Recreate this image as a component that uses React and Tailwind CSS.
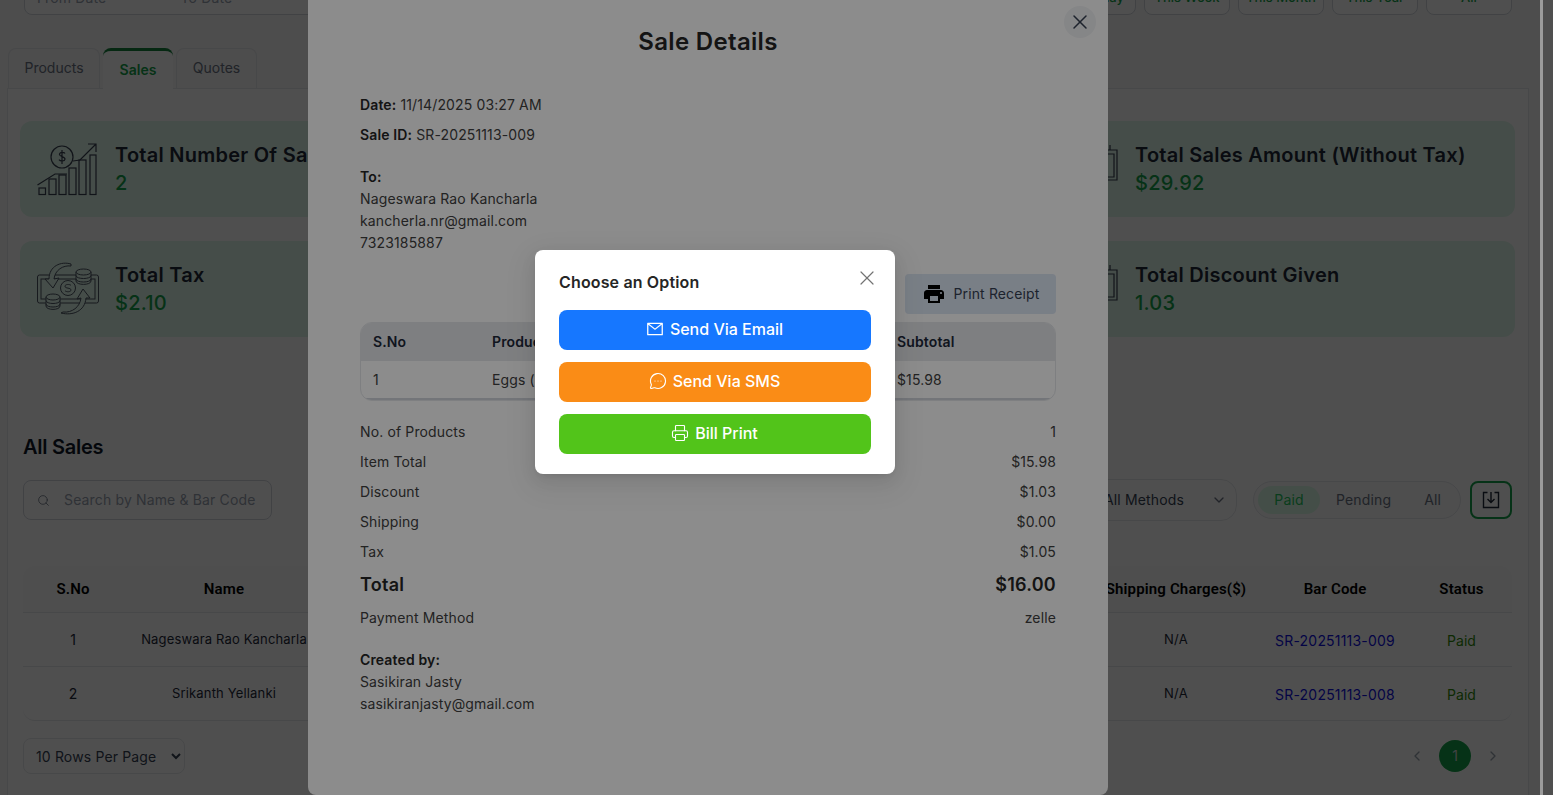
import React from 'react';
import { ChevronDown, ChevronLeft, ChevronRight, MessageCircleMore, Printer, Search, X } from 'lucide-react';
import { AiOutlineMail } from 'react-icons/ai';
import { MdLocalPrintshop } from 'react-icons/md';

const rangeButtons = ['This Week', 'This Month', 'This Year', 'All'];

const salesRows = [
  { id: 1, name: 'Nageswara Rao Kancharla', code: 'SR-20251113-009' },
  { id: 2, name: 'Srikanth Yellanki', code: 'SR-20251113-008' },
];

const summaryRows = [
  ['No. of Products', '1'],
  ['Item Total', '$15.98'],
  ['Discount', '$1.03'],
  ['Shipping', '$0.00'],
  ['Tax', '$1.05'],
];

function ChartIcon() {
  return (
    <svg width="62" height="55" viewBox="0 0 62 55" fill="none" stroke="#374151" strokeWidth="1.2" className="shrink-0">
      <circle cx="25" cy="15" r="11" />
      <path d="M28 11.5c-.8-1.3-4.800-1.800-5.500.5-.8 2.800 5.800 2.300 5.500 5.200-.3 2.300-4.800 2.300-6 .5M25 8v14" />
      <path d="M0.500 43 18 32h12M36 19l7-1 16-16M51 2h8v8" />
      <rect x="2" y="46" width="6.500" height="6.500" />
      <rect x="12" y="37" width="7" height="15.500" />
      <rect x="22" y="33" width="7" height="19.500" />
      <rect x="32" y="26" width="7" height="26.500" />
      <rect x="42" y="18" width="7" height="34.500" />
      <rect x="53" y="13" width="6" height="39.500" />
    </svg>
  );
}

function MoneyIcon() {
  const card = '#e0f7ea';
  return (
    <svg width="62" height="54" viewBox="0 0 62 54" fill="none" stroke="#4b5563" strokeWidth="1" className="shrink-0">
      <rect x="0.5" y="13" width="61" height="28" rx="2" />
      <rect x="4" y="17" width="54" height="20" />
      <path d="M34 2C24-1 12 4 12 17H8l8 9 6-10-5 1C18 8 26 3 34 4Z" fill={card} />
      <path d="M24 51C36 54 48 49 49 36h4l-7-9-6 10 4-1C43 45 35 51 26 50Z" fill={card} />
      <circle cx="31" cy="26" r="7.500" fill={card} />
      <path d="M34 23.500c-1-1.500-6-1.500-6 .8 0 2.500 6 1.200 6 3.700 0 2.200-5 2.200-6 .6" />
      <path d="M39 10v9c0 4.500 15 4.500 15 0v-9" fill={card} />
      <ellipse cx="46.500" cy="10" rx="7.500" ry="3" fill={card} />
      <path d="M39 13.500c0 4 15 4 15 0M39 17c0 4 15 4 15 0" />
      <path d="M9 35v9c0 4.500 14 4.500 14 0v-9" fill={card} />
      <ellipse cx="16" cy="35" rx="7" ry="3" fill={card} />
      <path d="M9 38.500c0 4 14 4 14 0M9 42c0 4 14 4 14 0" />
    </svg>
  );
}

function SideIcon() {
  return (
    <svg width="62" height="55" viewBox="0 0 62 55" fill="none" stroke="#374151" strokeWidth="1.2" className="shrink-0">
      <path d="M44 8h16v30H44z" />
      <path d="M40 12h17v23H40M53 3v5" />
    </svg>
  );
}

function StatCard({ icon, title, value }) {
  return (
    <div className="flex h-[96px] w-[475px] items-center gap-[16px] rounded-xl bg-[#e0f7ea] pl-[17px]">
      {icon}
      <div className="pb-[2px] tracking-[0.25px]">
        <p className="whitespace-nowrap text-[20px] leading-[30px] font-semibold text-[#1f2937]">{title}</p>
        <p className="text-[20px] leading-[26px] font-medium text-[#16a34a]">{value}</p>
      </div>
    </div>
  );
}

function DownloadIcon() {
  return (
    <svg width="18" height="18" viewBox="0 0 18 18" fill="none" stroke="#1f2937" strokeWidth="1.4">
      <path d="M5.500 1.500H1.500v15h15v-15h-4" />
      <path d="M9 1v10M5.500 8 9 11.500 12.500 8" />
    </svg>
  );
}

function BackgroundPage() {
  return (
    <div className="-mt-[26px] w-[1540px] shrink-0 bg-[#f6f7f7]">
      <div className="flex h-[41px] justify-between pl-[24px] pr-[28px]">
        <div className="flex w-[500px] items-center gap-[74px] rounded-lg border border-gray-300 bg-white px-3 pt-[7px] text-sm tracking-[0.15px] text-gray-400">
          <span>From Date</span>
          <span>To Date</span>
        </div>
        <div className="flex gap-2">
          <button className="h-[41px] w-[62px] rounded-lg border border-gray-300 bg-white pt-[7px] text-[13px] font-medium text-[#16a34a]">Today</button>
          {rangeButtons.map((label) => (
            <button key={label} className="h-[41px] w-[86px] rounded-lg border border-gray-300 bg-white pt-[7px] text-[13px] font-medium text-[#16a34a]">
              {label}
            </button>
          ))}
        </div>
      </div>

      <div className="mt-[33px] flex items-end gap-[3px] pl-[8px]">
        <div className="flex h-[40px] w-[92px] items-center justify-center rounded-t-lg border border-b-0 border-gray-200 pb-[2px] text-sm text-gray-500">Products</div>
        <div className="-mb-px flex h-[41px] w-[70px] items-center justify-center rounded-t-lg border-t-[3px] border-[#15803d] bg-white text-sm font-semibold text-[#16a34a]">Sales</div>
        <div className="flex h-[40px] w-[81px] items-center justify-center rounded-t-lg border border-b-0 border-gray-200 pb-[2px] text-sm text-gray-500">Quotes</div>
      </div>

      <div className="ml-[7px] h-[740px] w-[1522px] border border-gray-200 bg-white pl-[12px] pr-[13px] pt-[32px]">
        <div className="flex justify-between">
          <StatCard icon={<ChartIcon />} title="Total Number Of Sales" value="2" />
          <StatCard icon={<SideIcon />} title="Total Sales Amount (Without Tax)" value="$29.92" />
        </div>
        <div className="mt-[24px] flex justify-between">
          <StatCard icon={<MoneyIcon />} title="Total Tax" value="$2.10" />
          <StatCard icon={<SideIcon />} title="Total Discount Given" value="1.03" />
        </div>

        <div className="pl-[3px] pr-[3px]">
          <h2 className="mt-[95px] text-[20px] leading-[30px] font-semibold tracking-[-0.25px] text-[#111827]">All Sales</h2>

          <div className="mt-[17px] flex items-center justify-between tracking-[0.15px]">
            <div className="flex h-[40px] w-[249px] items-center gap-[14px] rounded-lg border border-gray-300 pl-[13px] text-sm text-gray-400">
              <Search size={13} strokeWidth={1.5} className="text-gray-500" />
              <span>Search by Name &amp; Bar Code</span>
            </div>
            <div className="flex items-center">
              <div className="flex h-[42px] w-[200px] items-center justify-between rounded-2xl border border-gray-200 pl-[66px] pr-[9px] text-sm text-gray-700">
                <span>All Methods</span>
                <ChevronDown size={16} className="text-gray-500" />
              </div>
              <div className="ml-[16px] flex h-[38px] w-[208px] items-center rounded-[19px] border border-gray-200 bg-gray-50 px-[4px] text-sm text-gray-500">
                <span className="flex h-[28px] w-[62px] items-center justify-center rounded-[14px] bg-[#dcfce7] text-[#22c55e]">Paid</span>
                <span className="ml-[16px]">Pending</span>
                <span className="ml-[33px]">All</span>
              </div>
              <button className="ml-[9px] flex h-[38px] w-[42px] items-center justify-center rounded-lg border-2 border-[#16a34a]">
                <DownloadIcon />
              </button>
            </div>
          </div>

          <table className="mt-[45px] w-full table-fixed border-separate border-spacing-0 text-center text-sm text-gray-800">
            <colgroup>
              <col className="w-[100px]" />
              <col className="w-[202px]" />
              <col />
              <col className="w-[166px]" />
              <col className="w-[152px]" />
              <col className="w-[101px]" />
            </colgroup>
            <thead>
              <tr className="h-[47px] bg-gray-50 font-['Roboto'] text-[15px] tracking-[0.15px] text-black">
                <th className="rounded-tl-xl border-b border-gray-200 pt-[2px] font-semibold">S.No</th>
                <th className="border-b border-gray-200 pt-[2px] font-semibold">Name</th>
                <th className="border-b border-gray-200" />
                <th className="whitespace-nowrap border-b border-gray-200 pt-[2px] font-semibold">Shipping Charges($)</th>
                <th className="border-b border-gray-200 pt-[2px] font-semibold">Bar Code</th>
                <th className="rounded-tr-xl border-b border-gray-200 pt-[2px] font-semibold">Status</th>
              </tr>
            </thead>
            <tbody>
              {salesRows.map((row, i) => (
                <tr key={row.id} className="h-[54px]">
                  <td className={i === 1 ? 'rounded-bl-xl border-b border-gray-200' : 'border-b border-gray-200'}>{row.id}</td>
                  <td className="whitespace-nowrap border-b border-gray-200 text-[13px] tracking-[0.16px]">{row.name}</td>
                  <td className="border-b border-gray-200" />
                  <td className="border-b border-gray-200 text-[13px] tracking-[0.3px]">N/A</td>
                  <td className="border-b border-gray-200 pt-[2px] tracking-[0.2px] text-[#1010e0]">{row.code}</td>
                  <td className={i === 1 ? 'rounded-br-xl border-b border-gray-200 pt-[2px] text-[#2f8a0a]' : 'border-b border-gray-200 pt-[2px] text-[#2f8a0a]'}>Paid</td>
                </tr>
              ))}
            </tbody>
          </table>

          <div className="mt-[17px] flex items-center justify-between">
            <select className="h-[36px] w-[162px] rounded-lg border border-gray-200 pl-[8px] text-sm tracking-[0.15px] text-gray-700">
              <option>10 Rows Per Page</option>
            </select>
            <div className="flex items-center gap-[14px] pr-[11px] text-gray-400">
              <ChevronLeft size={16} />
              <span className="flex h-[32px] w-[32px] items-center justify-center rounded-full bg-[#16a34a] text-sm text-gray-300">1</span>
              <ChevronRight size={16} />
            </div>
          </div>
        </div>
      </div>
    </div>
  );
}

function SaleDetailsModal() {
  return (
    <div className="absolute -top-[16px] bottom-0 left-[308px] w-[800px] rounded-lg bg-white px-[52px] pt-[16px] text-sm tracking-[0.13px] text-neutral-700">
      <button className="absolute right-[12px] top-[22px] flex h-8 w-8 items-center justify-center rounded-full bg-gray-100 text-gray-700">
        <X size={24} strokeWidth={1.5} />
      </button>
      <h1 className="pt-[26px] text-center text-[24px] leading-[32px] font-semibold tracking-[0.33px] text-neutral-800">Sale Details</h1>

      <p className="mt-[36px] leading-[22px]"><b className="font-semibold text-neutral-800">Date:</b> 11/14/2025 03:27 AM</p>
      <p className="mt-[8px] leading-[22px]"><b className="font-semibold text-neutral-800">Sale ID:</b> SR-20251113-009</p>

      <div className="mt-[20px] leading-[22px]">
        <p className="font-semibold text-neutral-800">To:</p>
        <p>Nageswara Rao Kancharla</p>
        <p>kancherla.nr@gmail.com</p>
        <p>7323185887</p>
      </div>

      <div className="mt-[20px] flex justify-end">
        <button className="flex h-[40px] w-[151px] items-center justify-center gap-[8px] rounded bg-[#dde7f5] text-gray-700">
          <MdLocalPrintshop size={24} className="text-black" />
          Print Receipt
        </button>
      </div>

      <div className="mt-[8px] overflow-hidden rounded-xl border border-gray-200">
        <div className="flex h-[38px] items-center bg-gray-200 pl-[12px] font-semibold text-gray-800">
          <span className="w-[119px]">S.No</span>
          <span className="w-[405px]">Product</span>
          <span>Subtotal</span>
        </div>
        <div className="flex h-[39px] items-center border-b-2 border-gray-300 pl-[12px]">
          <span className="w-[119px]">1</span>
          <span className="w-[405px]">Eggs (12)</span>
          <span>$15.98</span>
        </div>
      </div>

      <div className="mt-[16px]">
        {summaryRows.map(([label, value]) => (
          <div key={label} className="flex h-[30px] items-center justify-between">
            <span>{label}</span>
            <span>{value}</span>
          </div>
        ))}
        <div className="flex h-[36px] items-center justify-between text-[18px] font-semibold tracking-[0.25px] text-neutral-800">
          <span>Total</span>
          <span>$16.00</span>
        </div>
        <div className="flex h-[30px] items-center justify-between">
          <span>Payment Method</span>
          <span>zelle</span>
        </div>
      </div>

      <div className="mt-[16px] leading-[22px]">
        <p className="font-semibold text-neutral-800">Created by:</p>
        <p>Sasikiran Jasty</p>
        <p>sasikiranjasty@gmail.com</p>
      </div>
    </div>
  );
}

function OptionButton({ color, icon, label }) {
  return (
    <button className={`flex h-[40px] w-full items-center justify-center gap-[6px] rounded-lg pb-[2px] pr-[1px] text-base font-medium text-white ${color}`}>
      {icon}
      {label}
    </button>
  );
}

function ChooseOptionModal() {
  return (
    <div className="absolute left-[535px] top-[250px] w-[360px] rounded-lg bg-white px-6 pb-5 pt-6 shadow-[0_6px_16px_rgba(0,0,0,0.08),0_3px_6px_-4px_rgba(0,0,0,0.12),0_9px_28px_8px_rgba(0,0,0,0.05)]">
      <button className="absolute right-[16px] top-[16px] text-neutral-500">
        <X size={24} strokeWidth={1.2} />
      </button>
      <h3 className="text-base leading-[16px] font-semibold tracking-[0.15px] text-neutral-800">Choose an Option</h3>
      <div className="mt-[20px] flex flex-col gap-3">
        <OptionButton color="bg-[#1677ff]" icon={<AiOutlineMail size={18} />} label="Send Via Email" />
        <OptionButton color="bg-[#fa8c16]" icon={<MessageCircleMore size={18} strokeWidth={1.5} />} label="Send Via SMS" />
        <OptionButton color="bg-[#52c41a]" icon={<Printer size={18} strokeWidth={1.5} />} label="Bill Print" />
      </div>
    </div>
  );
}

export default function App() {
  return (
    <div className="relative flex h-[795px] w-full overflow-hidden bg-white font-['Inter',sans-serif]">
      <BackgroundPage />
      <div className="absolute inset-0 bg-black/[0.43]" />
      <SaleDetailsModal />
      <div className="absolute inset-0 bg-black/45" />
      <div className="absolute bottom-0 right-[10px] top-0 w-[3px] bg-[#9c9c9c]" />
      <ChooseOptionModal />
    </div>
  );
}
